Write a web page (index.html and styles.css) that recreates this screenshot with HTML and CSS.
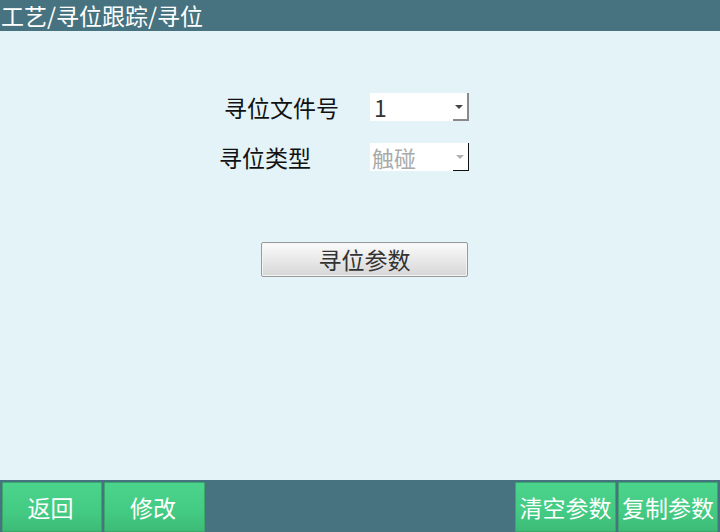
FILE: index.html
```html
<!DOCTYPE html>
<html>
<head>
<meta charset="utf-8">
<link rel="stylesheet" href="styles.css">
</head>
<body>
<div class="page">
  <div class="header"><span class="title">工艺/寻位跟踪/寻位</span></div>
  <div class="main">
    <div class="row row1">
      <div class="label label1">寻位文件号</div>
      <div class="select">
        <span class="value">1</span>
        <span class="drop drop-gray"><span class="arrow"></span></span>
      </div>
    </div>
    <div class="row row2">
      <div class="label label2">寻位类型</div>
      <div class="select">
        <span class="value disabled">触碰</span>
        <span class="drop drop-black"><span class="arrow arrow-light"></span></span>
      </div>
    </div>
    <div class="btn-row">
      <button class="param-btn">寻位参数</button>
    </div>
  </div>
  <div class="footer">
    <div class="group">
      <button class="green">返回</button>
      <button class="green">修改</button>
    </div>
    <div class="group">
      <button class="green">清空参数</button>
      <button class="green">复制参数</button>
    </div>
  </div>
</div>
</body>
</html>
```
FILE: styles.css
```css
* { box-sizing: border-box; }
html, body { margin: 0; padding: 0; }
body {
  width: 720px;
  height: 532px;
  overflow: hidden;
  font-family: "Noto Sans CJK SC", "Noto Sans", sans-serif;
}
.page {
  width: 720px;
  height: 532px;
  display: flex;
  flex-direction: column;
  background: #e4f3f8;
}
.header {
  height: 31px;
  background: #46737f;
  color: #ffffff;
  display: flex;
  align-items: center;
  padding-left: 1px;
}
.title {
  font-size: 23px;
  line-height: 29px;
  white-space: nowrap;
}
.main {
  flex: 1;
  display: flex;
  flex-direction: column;
}
.row {
  display: flex;
  align-items: center;
  height: 28px;
}
.row1 { margin-top: 62px; }
.row2 { margin-top: 22px; }
.label {
  font-size: 23px;
  color: #111;
  line-height: 28px;
  white-space: nowrap;
}
.label1 { margin-left: 224px; width: 146px; }
.label2 { margin-left: 219px; width: 151px; }
.select {
  width: 99px;
  height: 28px;
  background: #ffffff;
  display: flex;
  align-items: center;
  justify-content: space-between;
}
.value {
  font-size: 23px;
  color: #333;
  padding-left: 4px;
  line-height: 28px;
}
.value.disabled { color: #aaaaaa; padding-left: 2px; font-size: 22px; }
.drop {
  width: 16px;
  height: 28px;
  display: flex;
  align-items: center;
  justify-content: center;
  padding-right: 2px;
}
.drop-gray {
  border-right: 2px solid #8a8a8a;
  border-bottom: 2px solid #8a8a8a;
}
.drop-black {
  border-right: 1px solid #111;
  border-bottom: 1px solid #111;
}
.arrow {
  width: 0;
  height: 0;
  border-left: 4px solid transparent;
  border-right: 4px solid transparent;
  border-top: 4px solid #444;
  margin-top: 1px;
}
.arrow-light { border-top-color: #b0b0b0; }
.btn-row {
  display: flex;
  margin-top: 71px;
  padding-left: 261px;
}
.param-btn {
  width: 207px;
  height: 35px;
  border: 1px solid #9a9a9a;
  border-radius: 2px;
  background: linear-gradient(#fbfbfb, #e9e9e9 50%, #d6d6d6);
  box-shadow: inset 0 0 0 1px #f4f4f4;
  font-family: "Noto Sans CJK SC", "Noto Sans", sans-serif;
  font-size: 23px;
  color: #333;
  line-height: 33px;
  padding: 0;
}
.footer {
  height: 52px;
  background: #46737f;
  display: flex;
  justify-content: space-between;
  align-items: flex-end;
  padding: 0 2px;
}
.group {
  display: flex;
  gap: 2px;
}
.green {
  width: 100px;
  height: 50px;
  border: 1px solid #3aa86b;
  border-radius: 1px;
  background: linear-gradient(#4bd48c, #44cb83 60%, #3cbb77);
  color: #ffffff;
  font-family: "Noto Sans CJK SC", "Noto Sans", sans-serif;
  font-size: 23px;
  padding: 0 3px 0 0;
  line-height: 48px;
  white-space: nowrap;
}
.group:first-child .green:last-child { width: 101px; }
.group:last-child .green:first-child { width: 101px; }
.group:last-child .green { padding: 0; }
```
